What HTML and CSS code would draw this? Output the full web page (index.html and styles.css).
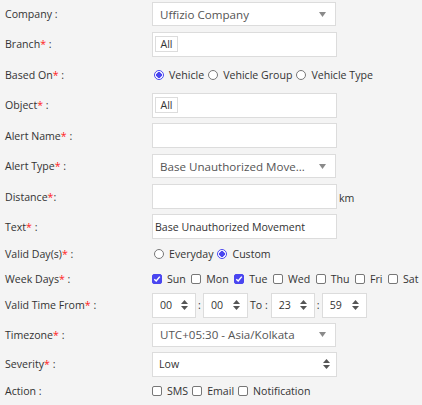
FILE: index.html
```html
<!DOCTYPE html>
<html>
<head>
<meta charset="utf-8">
<link rel="stylesheet" href="styles.css">
</head>
<body>
<form class="form">
  <div class="label">Company :</div>
  <div class="ctl"><div class="select w184"><span class="val">Uffizio Company</span><svg class="caret" width="7" height="5" viewBox="0 0 7 5"><path d="M0 0H7L3.5 5Z" fill="#8a8a8a"/></svg></div></div>

  <div class="label">Branch<span class="req">*</span> :</div>
  <div class="ctl"><div class="tagbox w185"><span class="tag">All</span></div></div>

  <div class="label">Based On<span class="req">*</span> :</div>
  <div class="ctl opts indent">
    <span class="radio on"></span><span class="opt">Vehicle</span>
    <span class="radio"></span><span class="opt">Vehicle Group</span>
    <span class="radio"></span><span class="opt">Vehicle Type</span>
  </div>

  <div class="label">Object<span class="req">*</span> :</div>
  <div class="ctl"><div class="tagbox w185"><span class="tag">All</span></div></div>

  <div class="label">Alert Name<span class="req">*</span> :</div>
  <div class="ctl"><div class="input w186"></div></div>

  <div class="label">Alert Type<span class="req">*</span> :</div>
  <div class="ctl"><div class="select w184"><span class="val">Base Unauthorized Move...</span><svg class="caret" width="7" height="5" viewBox="0 0 7 5"><path d="M0 0H7L3.5 5Z" fill="#8a8a8a"/></svg></div></div>

  <div class="label">Distance<span class="req">*</span>:</div>
  <div class="ctl"><div class="input w186"></div><span class="unit">km</span></div>

  <div class="label">Text<span class="req">*</span> :</div>
  <div class="ctl"><div class="input w186 txt">Base Unauthorized Movement</div></div>

  <div class="label">Valid Day(s)<span class="req">*</span> :</div>
  <div class="ctl opts indent">
    <span class="radio"></span><span class="opt">Everyday</span>
    <span class="radio on"></span><span class="opt">Custom</span>
  </div>

  <div class="label">Week Days<span class="req">*</span> :</div>
  <div class="ctl opts days">
    <span class="cb on"><svg width="8" height="8" viewBox="0 0 8 8"><path d="M1.3 4.2L3.2 6L6.8 1.6" fill="none" stroke="#fff" stroke-width="1.5"/></svg></span><span class="opt">Sun</span>
    <span class="cb"></span><span class="opt">Mon</span>
    <span class="cb on"><svg width="8" height="8" viewBox="0 0 8 8"><path d="M1.3 4.2L3.2 6L6.8 1.6" fill="none" stroke="#fff" stroke-width="1.5"/></svg></span><span class="opt">Tue</span>
    <span class="cb"></span><span class="opt">Wed</span>
    <span class="cb"></span><span class="opt">Thu</span>
    <span class="cb"></span><span class="opt">Fri</span>
    <span class="cb"></span><span class="opt">Sat</span>
  </div>

  <div class="label">Valid Time From<span class="req">*</span> :</div>
  <div class="ctl time">
    <div class="spin w44"><span class="val">00</span><svg class="updown" width="7" height="10" viewBox="0 0 7 10"><path d="M0 4H7L3.5 0Z M0 6H7L3.5 10Z" fill="#555"/></svg></div>
    <span class="sep">:</span>
    <div class="spin w45"><span class="val">00</span><svg class="updown" width="7" height="10" viewBox="0 0 7 10"><path d="M0 4H7L3.5 0Z M0 6H7L3.5 10Z" fill="#555"/></svg></div>
    <span class="to">To :</span>
    <div class="spin w44"><span class="val">23</span><svg class="updown" width="7" height="10" viewBox="0 0 7 10"><path d="M0 4H7L3.5 0Z M0 6H7L3.5 10Z" fill="#555"/></svg></div>
    <span class="sep">:</span>
    <div class="spin w45"><span class="val">59</span><svg class="updown" width="7" height="10" viewBox="0 0 7 10"><path d="M0 4H7L3.5 0Z M0 6H7L3.5 10Z" fill="#555"/></svg></div>
  </div>

  <div class="label">Timezone<span class="req">*</span> :</div>
  <div class="ctl"><div class="select w184"><span class="val">UTC+05:30 - Asia/Kolkata</span><svg class="caret" width="7" height="5" viewBox="0 0 7 5"><path d="M0 0H7L3.5 5Z" fill="#8a8a8a"/></svg></div></div>

  <div class="label">Severity<span class="req">*</span> :</div>
  <div class="ctl"><div class="select sev w186"><span class="val">Low</span><svg class="updown" width="7" height="10" viewBox="0 0 7 10"><path d="M0 4H7L3.5 0Z M0 6H7L3.5 10Z" fill="#555"/></svg></div></div>

  <div class="label">Action :</div>
  <div class="ctl opts">
    <span class="cb"></span><span class="opt">SMS</span>
    <span class="cb"></span><span class="opt">Email</span>
    <span class="cb"></span><span class="opt">Notification</span>
  </div>
</form>
</body>
</html>
```
FILE: styles.css
```css
html, body {
  margin: 0;
  padding: 0;
  background: #f4f4f4;
}
body {
  font-family: "Open Sans", "DejaVu Sans", sans-serif;
  font-size: 10.6px;
  color: #333;
}
.form {
  display: grid;
  grid-template-columns: 147px 1fr;
  grid-template-rows: 28px 32px 30px 30px 31px 30px 31px 29px 26px 24px 28px 31px 28px 26px;
  padding-left: 5px;
  align-items: center;
}
.label {
  white-space: nowrap;
}
.req {
  color: #f22;
}
.ctl {
  display: flex;
  align-items: center;
  height: 100%;
}
.w184 { width: 184px; }
.w185 { width: 185px; }
.w186 { width: 185px; }
.select, .input, .tagbox, .spin {
  box-sizing: border-box;
  height: 25px;
  background: #fff;
  border: 1px solid #dcdcdc;
  display: flex;
  align-items: center;
}
.select {
  height: 24px;
  padding: 0 6px 0 7px;
  font-size: 11.6px;
  color: #555;
  justify-content: space-between;
}
.select.sev {
  height: 25px;
  font-size: 10.6px;
  color: #333;
  padding-left: 6px;
  padding-right: 6px;
}
.select .caret {
  margin-right: 3px;
}
.tagbox {
  padding-left: 2px;
}
.tag {
  box-sizing: border-box;
  height: 16px;
  width: 23px;
  border: 1px solid #dcdcdc;
  display: flex;
  align-items: center;
  justify-content: center;
}
.input.txt {
  padding-left: 2px;
}
.unit {
  margin-left: 2px;
  margin-top: 2px;
}
.opts {
  display: flex;
  align-items: center;
}
.opts.indent {
  padding-left: 2px;
}
.opt {
  margin-left: 5px;
  margin-right: 4px;
}
.days .opt {
  margin-right: 5.5px;
}
.radio {
  box-sizing: border-box;
  width: 10px;
  height: 10px;
  border-radius: 50%;
  border: 1px solid #777;
  background: #fff;
}
.radio.on {
  border: 1px solid #4a46f0;
  background: radial-gradient(circle, #4a46f0 0 2.6px, #fff 3px);
}
.cb {
  box-sizing: border-box;
  width: 10px;
  height: 10px;
  border: 1px solid #777;
  border-radius: 2px;
  background: #fff;
  display: flex;
  align-items: center;
  justify-content: center;
}
.cb.on {
  background: #4a46f0;
  border-color: #4a46f0;
}
.spin {
  height: 25px;
  padding: 0 7px 0 7px;
  justify-content: space-between;
}
.w44 { width: 44px; }
.w45 { width: 45px; }
.time .sep {
  width: 7px;
  text-align: center;
}
.time .to {
  margin: 0 3px 0 2px;
}
```
